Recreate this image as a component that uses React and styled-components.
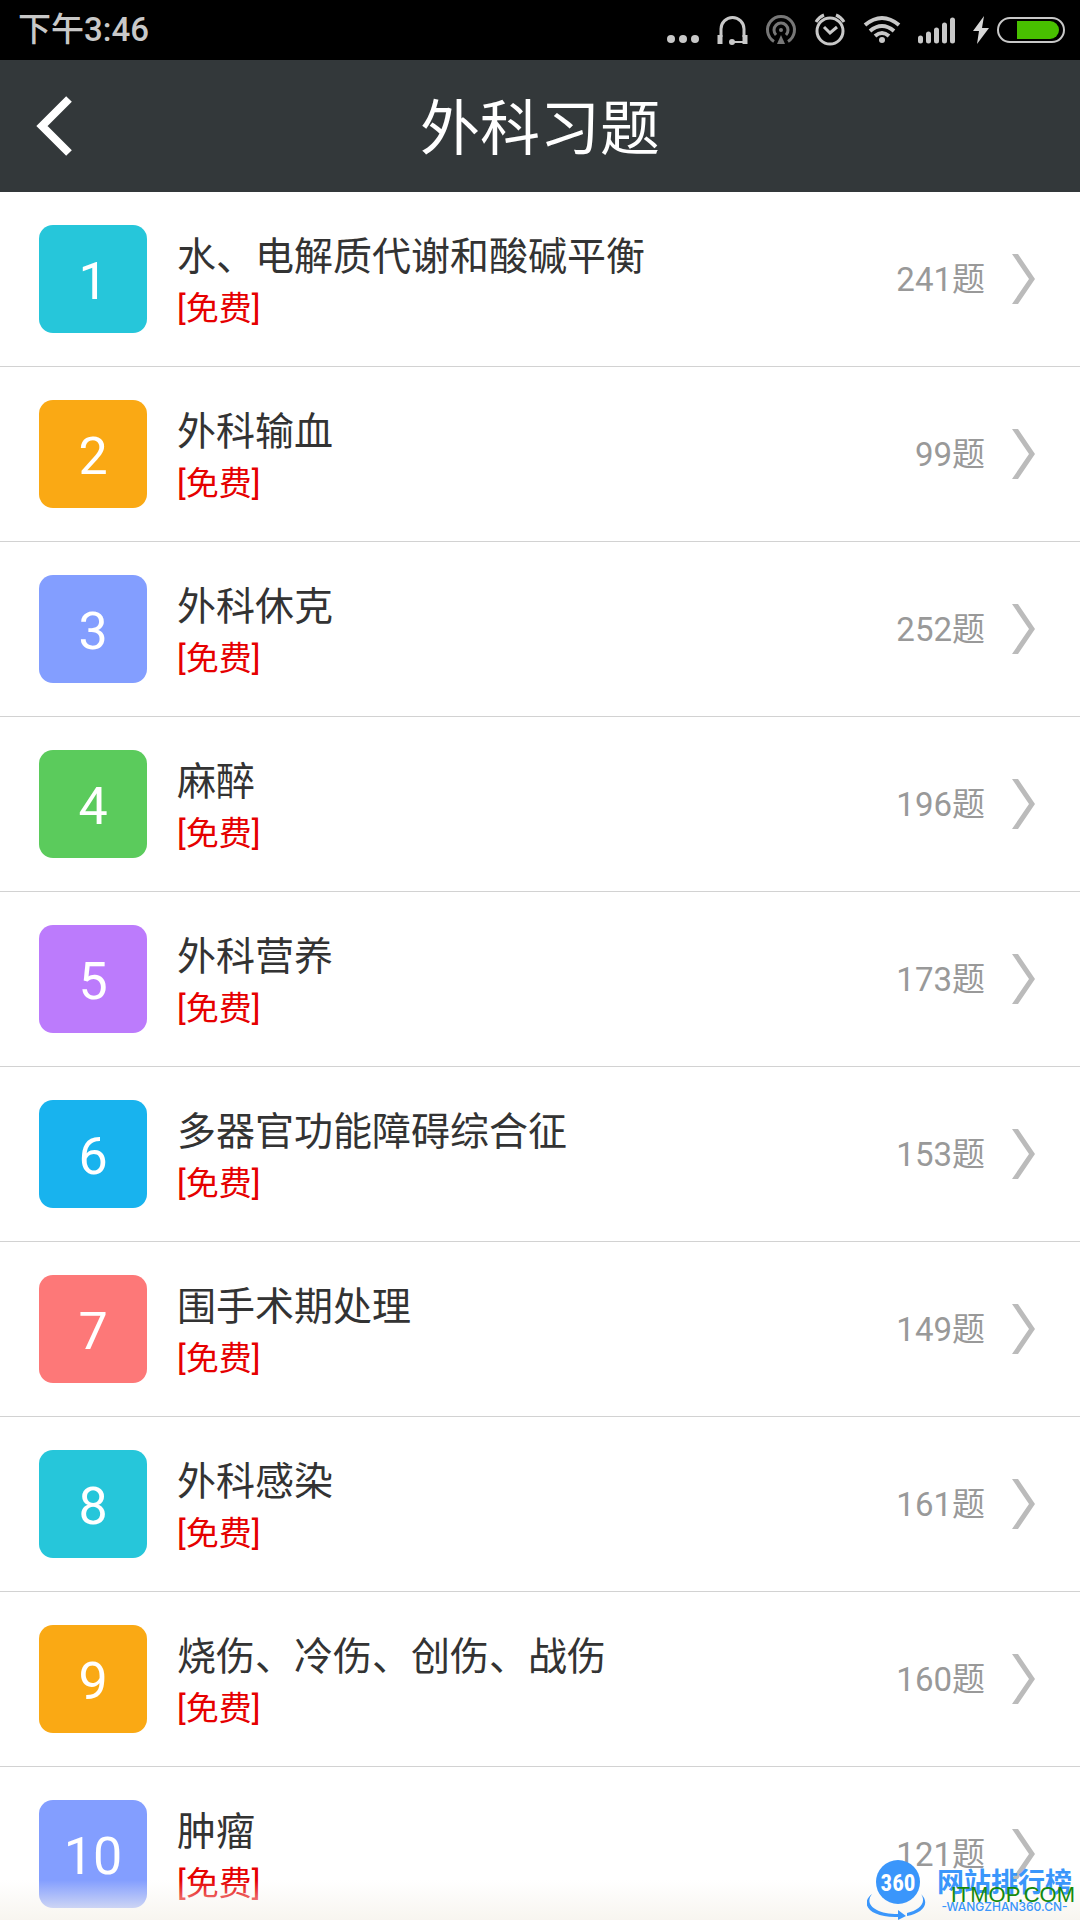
import React from "react";
import styled, { createGlobalStyle } from "styled-components";

const GlobalStyle = createGlobalStyle`
  *, *::before, *::after { box-sizing: border-box; }
  body {
    margin: 0;
    background: #fff;
    font-family: Roboto, "Noto Sans CJK SC", sans-serif;
  }
`;

const Screen = styled.div`
  position: relative;
  display: flex;
  flex-direction: column;
  height: 100vh;
  overflow: hidden;
`;

const StatusBar = styled.div`
  flex: none;
  display: flex;
  align-items: center;
  justify-content: space-between;
  height: 60px;
  padding: 0 15px 0 18px;
  background: #000;
  color: #c8c8c8;
`;

const Clock = styled.time`
  font-size: 33px;
  font-weight: 500;
  line-height: 40px;
`;

const StatusIcons = styled.div`
  display: flex;
  align-items: center;

  svg {
    display: block;
  }
`;

const Header = styled.header`
  flex: none;
  display: grid;
  grid-template-columns: 108px 1fr 108px;
  align-items: center;
  height: 132px;
  background: #33383a;
  color: #fff;
`;

const BackButton = styled.button`
  display: flex;
  align-items: center;
  height: 132px;
  padding: 0 0 0 36px;
  border: 0;
  background: none;
  color: inherit;
  cursor: pointer;
`;

const PageTitle = styled.h1`
  margin: 0;
  padding-top: 8px;
  font-size: 60px;
  font-weight: 400;
  line-height: 80px;
  text-align: center;
`;

const ChapterList = styled.ul`
  flex: 1;
  min-height: 0;
  margin: 0;
  padding: 0;
  overflow-y: auto;
  scrollbar-width: none;
  list-style: none;
`;

const ChapterLink = styled.a`
  display: flex;
  align-items: center;
  height: 175px;
  padding: 0 44px 0 39px;
  border-bottom: 1px solid #d2d2d2;
  color: #333;
  text-decoration: none;
`;

const Badge = styled.span`
  flex: none;
  display: flex;
  align-items: center;
  justify-content: center;
  width: 108px;
  height: 108px;
  padding-top: 6px;
  border-radius: 14px;
  background: ${(p) => p.$color};
  color: #fff;
  font-size: 52px;
  line-height: 60px;
`;

const ChapterText = styled.span`
  flex: 1;
  display: flex;
  flex-direction: column;
  min-width: 0;
  padding: 8px 0 0 30px;
`;

const ChapterName = styled.span`
  font-size: 39px;
  line-height: 52px;
`;

const FreeTag = styled.span`
  color: #e60000;
  font-size: 33px;
  line-height: 52px;
`;

const Count = styled.span`
  padding-top: 2px;
  margin-right: 27px;
  color: #999;
  font-size: 33px;
  line-height: 52px;
`;

const BottomFade = styled.div`
  position: absolute;
  right: 0;
  bottom: 0;
  left: 0;
  height: 40px;
  background: linear-gradient(rgba(247, 244, 238, 0), rgba(247, 244, 238, 0.9));
  pointer-events: none;
`;

const Watermark = styled.div`
  position: absolute;
  right: 8px;
  bottom: 0;
  display: flex;
  align-items: flex-end;
  gap: 10px;
  color: #3a96fb;
  pointer-events: none;
`;

const Logo = styled.svg`
  display: block;
  font-family: "Liberation Sans Narrow", "Roboto Condensed", Roboto, sans-serif;
`;

const WatermarkText = styled.div`
  position: relative;
  display: flex;
  flex-direction: column;
  padding-bottom: 5px;
`;

const SiteName = styled.span`
  font-size: 27px;
  font-weight: 700;
  line-height: 32px;
`;

const SiteAddress = styled.span`
  font-family: Inter, sans-serif;
  font-size: 12px;
  font-weight: 500;
  line-height: 16px;
  text-align: center;
`;

const SourceSite = styled.span`
  position: absolute;
  right: -3px;
  bottom: 13px;
  color: #168a0c;
  font-family: "Liberation Sans", Arial, sans-serif;
  font-size: 22px;
  line-height: 24px;
`;

const palette = ["#26c6da", "#faa914", "#839eff", "#5bcb5c", "#bc7bfc", "#18b3ee", "#fd7878"];

const chapters = [
  { name: "水、电解质代谢和酸碱平衡", count: 241 },
  { name: "外科输血", count: 99 },
  { name: "外科休克", count: 252 },
  { name: "麻醉", count: 196 },
  { name: "外科营养", count: 173 },
  { name: "多器官功能障碍综合征", count: 153 },
  { name: "围手术期处理", count: 149 },
  { name: "外科感染", count: 161 },
  { name: "烧伤、冷伤、创伤、战伤", count: 160 },
  { name: "肿瘤", count: 121 },
];

function StatusGlyphs() {
  return (
    <svg width="400" height="60" viewBox="665 0 400 60" fill="none" stroke="#c8c8c8" aria-hidden="true">
      <g fill="#c8c8c8" stroke="none">
        <circle cx="671" cy="39" r="4" />
        <circle cx="683" cy="39" r="4" />
        <circle cx="695" cy="39" r="4" />
      </g>
      <path d="M721 37V29a11.500 11.500 0 0 1 23 0V37" strokeWidth="3" />
      <path d="M720 35v9M745 35v9" strokeWidth="5" />
      <path d="M732 42h12" strokeWidth="2" />
      <circle cx="732" cy="42" r="3" fill="#c8c8c8" stroke="none" />
      <g stroke="#777">
        <path d="M774 41.500a13.500 13.500 0 1 1 14 0" strokeWidth="3" />
        <path d="M776 35a7 7 0 1 1 10 0" strokeWidth="3" />
        <circle cx="781" cy="30" r="2" fill="#777" stroke="none" />
        <path d="M781 35l4 9h-8z" fill="#777" stroke="none" />
      </g>
      <circle cx="830" cy="31" r="13" strokeWidth="3" />
      <path d="M824 27l6 6 7-6" strokeWidth="3" />
      <path d="M816 22q3-5 8-7M844 22q-3-5-8-7" strokeWidth="3" />
      <g strokeWidth="4">
        <path d="M865 25q17-14 34 0" />
        <path d="M870 31q12-10 24 0" />
        <path d="M875 36q7-6 14 0" />
      </g>
      <circle cx="882" cy="40" r="3" fill="#c8c8c8" stroke="none" />
      <g strokeWidth="5" strokeLinecap="round">
        <path d="M920.500 38v3M928.500 34v7M936.500 30v11M944.500 25v16M952.500 20v21" />
      </g>
      <path d="M984 16L973 31h6l-2 13 12-16h-7z" fill="#d8d8d8" stroke="none" />
      <rect x="998" y="18" width="66" height="24" rx="12" strokeWidth="2" />
      <path d="M1017 21h33a9 9 0 0 1 0 18h-33z" fill="#48c000" stroke="none" />
    </svg>
  );
}

function Chevron() {
  return (
    <svg width="24" height="50" viewBox="0 0 24 50" fill="none" aria-hidden="true">
      <path d="M0 0h6L23 25 6 50H0L17 25z" fill="#bbb" />
    </svg>
  );
}

function ChapterRow({ index, name, count }) {
  return (
    <li>
      <ChapterLink href={`#chapter-${index + 1}`}>
        <Badge $color={palette[index % palette.length]}>{index + 1}</Badge>
        <ChapterText>
          <ChapterName>{name}</ChapterName>
          <FreeTag>[免费]</FreeTag>
        </ChapterText>
        <Count>{count}题</Count>
        <Chevron />
      </ChapterLink>
    </li>
  );
}

export default function App() {
  return (
    <Screen>
      <GlobalStyle />
      <StatusBar>
        <Clock>下午3:46</Clock>
        <StatusIcons>
          <StatusGlyphs />
        </StatusIcons>
      </StatusBar>
      <Header>
        <BackButton type="button" aria-label="返回">
          <svg width="36" height="60" viewBox="0 0 36 60" fill="none" aria-hidden="true">
            <path d="M33 3L6 30l27 27" stroke="#fff" strokeWidth="8" />
          </svg>
        </BackButton>
        <PageTitle>外科习题</PageTitle>
      </Header>
      <ChapterList>
        {chapters.map((chapter, index) => (
          <ChapterRow key={chapter.name} index={index} {...chapter} />
        ))}
      </ChapterList>
      <BottomFade />
      <Watermark>
        <Logo width="60" height="60" viewBox="0 0 60 60">
          <circle cx="31" cy="22" r="22" fill="#3a96fb" />
          <text x="31" y="31" fill="#fff" fontSize="23" fontWeight="700" textAnchor="middle">360</text>
          <path d="M5 34C-3 44 8 54 31 54v-4l8 6-8 4v-3C3 58-8 44 5 34z" fill="#3a96fb" />
          <path d="M54 34c10 10 1 19-14 22v-3c12-3 20-10 14-19z" fill="#3a96fb" />
        </Logo>
        <WatermarkText>
          <SiteName>网站排行榜</SiteName>
          <SiteAddress>-WANGZHAN360.CN-</SiteAddress>
          <SourceSite>ITMOP.COM</SourceSite>
        </WatermarkText>
      </Watermark>
    </Screen>
  );
}
